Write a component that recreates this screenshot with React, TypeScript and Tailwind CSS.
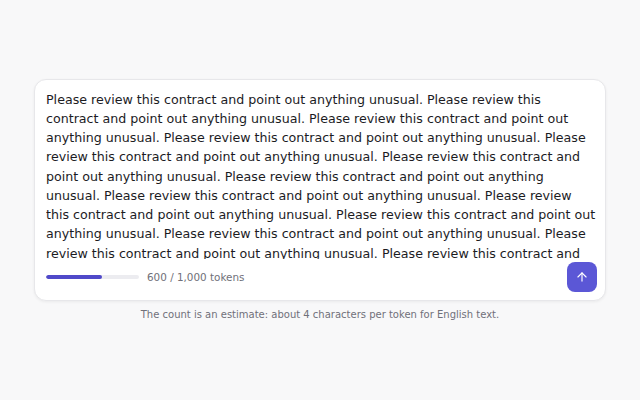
import React from "react";
import { ArrowUp } from "lucide-react";

const TEXT = Array(40).fill("Please review this contract and point out anything unusual.").join(" ");

export default function App() {
  return (
    <div
      className="min-h-screen w-full bg-[#f8f8f9] flex flex-col items-center justify-center"
      style={{ fontFamily: '"DejaVu Sans", sans-serif' }}
    >
      <div className="w-[572px] bg-white border border-[#e7e7ea] rounded-xl shadow-[0_1px_3px_rgba(0,0,0,0.06)] pt-[10px] pl-[11px] pr-[8px] pb-2">
        <textarea
          defaultValue={TEXT}
          className="block w-full h-[169px] resize-none outline-none overflow-hidden text-[12.65px] leading-[19.25px] text-[#1c1c1f] bg-transparent p-0"
          style={{ fontFamily: '"DejaVu Sans", sans-serif' }}
        />
        <div className="mt-[3px] flex items-center justify-between">
          <div className="flex items-center gap-2">
            <div className="w-[93px] h-1 rounded-full bg-[#ececf0] overflow-hidden">
              <div className="h-full rounded-full bg-[#5049c9]" style={{ width: "60%" }} />
            </div>
            <span className="text-[10.4px] leading-4 text-[#707079]">600 / 1,000 tokens</span>
          </div>
          <button className="w-[30px] h-[30px] rounded-lg bg-[#5b57d6] flex items-center justify-center text-white">
            <ArrowUp size={14} strokeWidth={2} />
          </button>
        </div>
      </div>
      <p className="mt-[7px] text-[10px] leading-[14px] text-[#707079]">
        The count is an estimate: about 4 characters per token for English text.
      </p>
    </div>
  );
}
